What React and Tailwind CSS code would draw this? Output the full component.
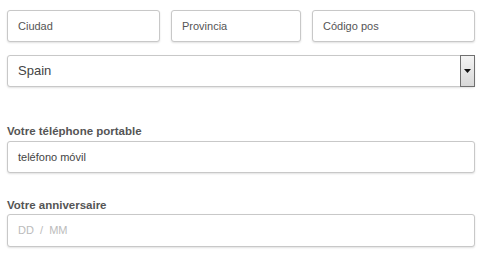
export default function App() {
  const font = { fontFamily: '"Liberation Sans", Arial, sans-serif' };
  const box = "h-[32px] border border-[#c8c8c8] rounded-[3px] bg-white shadow-[0_1px_2px_rgba(0,0,0,0.12)] flex items-center";
  return (
    <div className="w-[484px] h-[255px] bg-white pl-[7px] pr-[9px] pt-[10px]" style={font}>
      <div className="flex gap-[11px]">
        <div className={`${box} w-[153px] px-[10px] text-[11px] text-[#555]`}>Ciudad</div>
        <div className={`${box} w-[130px] px-[10px] text-[11px] text-[#555]`}>Provincia</div>
        <div className={`${box} flex-1 px-[10px] text-[11px] text-[#555]`}>Código pos</div>
      </div>
      <div className="mt-[13px] h-[32px] border border-[#c8c8c8] rounded-[3px] bg-white shadow-[0_1px_2px_rgba(0,0,0,0.12)] flex items-stretch">
        <div className="flex-1 flex items-center px-[10px] text-[13px] text-[#444]">Spain</div>
        <div className="w-[15px] m-[-1px] border border-[#707070] bg-gradient-to-b from-[#f4f4f4] to-[#d8d8d8] flex items-center justify-center">
          <svg width="7" height="4" viewBox="0 0 7 4"><path d="M0 0H7L3.5 4Z" fill="#111" /></svg>
        </div>
      </div>
      <div className="mt-[37px] text-[11.5px] font-bold text-[#555] leading-[14px]">Votre téléphone portable</div>
      <div className={`${box} mt-[3px] px-[10px] text-[11px] text-[#444]`}>teléfono móvil</div>
      <div className="mt-[25px] text-[11.5px] font-bold text-[#555] leading-[14px]">Votre anniversaire</div>
      <div className={`${box} mt-[2px] h-[33px] px-[10px] text-[11px] text-[#bbb]`}>DD&nbsp;&nbsp;/&nbsp;&nbsp;MM</div>
    </div>
  );
}
